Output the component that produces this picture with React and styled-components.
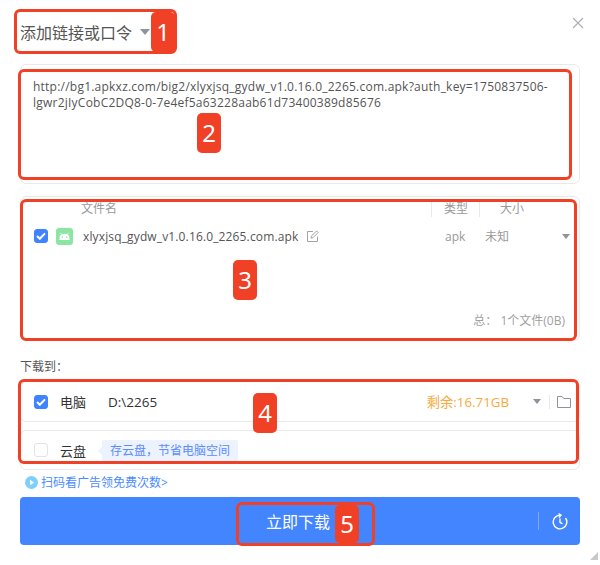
import React from "react";
import styled, { createGlobalStyle } from "styled-components";

const FONT = `"Open Sans", "Noto Sans CJK SC", "Noto Sans", sans-serif`;

const Global = createGlobalStyle`
  html, body { margin: 0; padding: 0; background: #fff; }
  body { font-family: ${FONT}; overflow: hidden; }
  * { box-sizing: border-box; }
`;

const Dialog = styled.div`
  position: relative;
  width: 600px;
  height: 565px;
  background: #fff;
  padding: 0 20px;
  overflow: hidden;
`;

const Header = styled.header`
  height: 64px;
  display: flex;
  align-items: center;
  gap: 8px;
`;
const Title = styled.h1`
  margin: 0;
  font-size: 16px;
  font-weight: 400;
  color: #555;
`;
const Caret = styled.span`
  display: block;
  width: 0;
  height: 0;
  flex: none;
  border-left: 4.5px solid transparent;
  border-right: 4.5px solid transparent;
  border-top: 5px solid #8f939c;
`;
const TitleCaret = styled(Caret)`
  border-left-width: 5px;
  border-right-width: 5px;
  border-top-width: 6px;
`;
const Close = styled.button`
  position: absolute;
  top: 17px;
  right: 16px;
  width: 12px;
  height: 12px;
  padding: 0;
  border: 0;
  background: none;
  display: block;
`;

const Panel = styled.section`
  background: #fff;
  border: 1px solid #e9e9e9;
  border-radius: 6px;
`;
const UrlBox = styled(Panel)`
  width: 560px;
  height: 120px;
  padding: 14px 12px;
  font-size: 12px;
  line-height: 16px;
  letter-spacing: 0.23px;
  color: #555;
`;
const FileBox = styled(Panel)`
  width: 560px;
  height: 145px;
  margin-top: 12px;
  display: flex;
  flex-direction: column;
`;
const Columns = styled.div`
  display: grid;
  grid-template-columns: 60px 350px 48px 1fr;
  height: 22px;
  align-items: center;
  font-size: 12px;
  color: #999;
  padding-top: 2px;
`;
const Col = styled.span`
  grid-column: ${(p) => p.$col};
  padding-left: ${(p) => p.$pad}px;
  border-left: ${(p) => (p.$sep ? "1px solid #e9e9e9" : "0")};
  line-height: 16px;
`;
const FileRow = styled.div`
  display: flex;
  align-items: center;
  height: 34px;
  padding-left: 13px;
  font-size: 12px;
  color: #555;
`;
const Check = styled.span`
  flex: none;
  width: 14px;
  height: 14px;
  border-radius: 3px;
  display: flex;
  align-items: center;
  justify-content: center;
  background: ${(p) => (p.$on ? "#3f83ff" : "#fff")};
  border: 1px solid ${(p) => (p.$on ? "#3f83ff" : "#e3e3e3")};
`;
const ApkIcon = styled.span`
  flex: none;
  width: 17px;
  height: 17px;
  margin-left: 8px;
  border-radius: 3px;
  background: #8be6a4;
  display: flex;
  align-items: center;
  justify-content: center;
`;
const FileName = styled.span`
  margin-left: 10px;
  width: 216px;
  white-space: nowrap;
  letter-spacing: 0.14px;
`;
const EditIcon = styled.svg`
  flex: none;
  margin-left: 7px;
`;
const FileType = styled.span`
  margin-left: 126px;
  width: 40px;
  color: #999;
`;
const FileSize = styled.span`
  color: #999;
  width: 77px;
  font-size: 12px;
`;
const Total = styled.div`
  margin-top: auto;
  height: 40px;
  padding: 11px 14px 0 0;
  text-align: right;
  font-size: 12px;
  color: #a0a0a0;
`;

const Label = styled.div`
  margin-top: 17px;
  height: 18px;
  font-size: 12px;
  line-height: 18px;
  color: #555;
`;
const StoreCard = styled(Panel)`
  width: 560px;
  height: ${(p) => p.$h}px;
  margin-top: ${(p) => p.$mt}px;
  display: flex;
  align-items: center;
  padding: 0 8px 0 13px;
  font-size: 13px;
  color: #333;
`;
const StoreName = styled.span`
  margin-left: 12px;
  width: 48px;
  flex: none;
`;
const Path = styled.span`
  font-size: 13.5px;
`;
const Free = styled.span`
  margin-left: auto;
  font-size: 13.3px;
  color: #f9a93b;
`;
const StoreCaret = styled(Caret)`
  margin-left: 24px;
`;
const Divider = styled.span`
  width: 1px;
  height: ${(p) => p.$h}px;
  flex: none;
  background: ${(p) => p.$c};
  margin: 0 ${(p) => p.$r}px 0 ${(p) => p.$l}px;
`;
const Tag = styled.span`
  position: relative;
  margin-left: -6px;
  height: 21px;
  padding: 0 8px;
  border-radius: 2px;
  background: #edf2ff;
  color: #5b8cff;
  font-size: 12px;
  line-height: 21px;
  &::before {
    content: "";
    position: absolute;
    left: -4px;
    top: 7px;
    border-top: 4px solid transparent;
    border-bottom: 4px solid transparent;
    border-right: 4px solid #edf2ff;
  }
`;
const Promo = styled.a`
  display: flex;
  align-items: center;
  height: 27px;
  padding: 0 0 3px 5px;
  gap: 3px;
  font-size: 12px;
  color: #4a8cff;
`;
const Submit = styled.button`
  width: 560px;
  height: 48px;
  border: 0;
  border-radius: 4px;
  background: #4285ff;
  color: #fff;
  font: 400 16px ${FONT};
  display: flex;
  align-items: center;
  padding: 0 12px 0 246px;
`;
const ClockWrap = styled.span`
  margin-left: auto;
  display: flex;
  align-items: center;
`;

const Annot = styled.div`
  position: absolute;
  left: ${(p) => p.$x}px;
  top: ${(p) => p.$y}px;
  width: ${(p) => p.$w}px;
  height: ${(p) => p.$h}px;
  border: 3.5px solid #f04025;
  border-radius: 6px;
  pointer-events: none;
`;
const Badge = styled.div`
  position: absolute;
  left: ${(p) => p.$x}px;
  top: ${(p) => p.$y}px;
  width: 24px;
  height: ${(p) => p.$h || 40}px;
  border-radius: 5px;
  background: #f04025;
  color: #fff;
  font: 400 24px/${(p) => p.$h || 40}px "Noto Sans", sans-serif;
  text-align: center;
`;

const ResizeGrip = styled.span`
  position: absolute;
  right: 2px;
  bottom: 5px;
  width: 0;
  height: 0;
  border-left: 8px solid transparent;
  border-bottom: 8px solid #c9c9c9;
`;

const Tick = () => (
  <svg width="10" height="8" viewBox="0 0 10 8" fill="none">
    <path d="M1 4l2.8 2.8L9 1.4" stroke="#fff" strokeWidth="2" />
  </svg>
);

export default function App() {
  return (
    <Dialog>
      <Global />
      <Header>
        <Title>添加链接或口令</Title>
        <TitleCaret />
        <Close aria-label="关闭">
          <svg width="12" height="12" viewBox="0 0 12 12" fill="none">
            <path d="M1 1l10 10M11 1L1 11" stroke="#a9adb5" strokeWidth="1.1" />
          </svg>
        </Close>
      </Header>

      <UrlBox>
        http://bg1.apkxz.com/big2/xlyxjsq_gydw_v1.0.16.0_2265.com.apk?auth_key=1750837506-lgwr2jIyCobC2DQ8-0-7e4ef5a63228aab61d73400389d85676
      </UrlBox>

      <FileBox>
        <Columns>
          <Col $col={2}>文件名</Col>
          <Col $col={3} $sep $pad={12}>类型</Col>
          <Col $col={4} $sep $pad={20}>大小</Col>
        </Columns>
        <FileRow>
          <Check $on><Tick /></Check>
          <ApkIcon>
            <svg width="11" height="9" viewBox="0 0 11 9" fill="none">
              <path d="M2.5 2.5L1.5 .8M8.5 2.5L9.5 .8" stroke="#fff" strokeWidth=".8" />
              <path d="M.5 8V5.5C.5 3.2 2.5 1.8 5.5 1.8S10.5 3.2 10.5 5.5V8z" fill="#fff" />
              <circle cx="3.5" cy="5.3" r=".7" fill="#8be6a4" />
              <circle cx="7.5" cy="5.3" r=".7" fill="#8be6a4" />
            </svg>
          </ApkIcon>
          <FileName>xlyxjsq_gydw_v1.0.16.0_2265.com.apk</FileName>
          <EditIcon width="13" height="13" viewBox="0 0 13 13" fill="none" stroke="#a3a3a3" strokeWidth="1">
            <path d="M7 1.5H1.5v10h10V6.5" />
            <path d="M5 8.2l.4-2L10.5.9l1.6 1.6L7 7.7z" />
          </EditIcon>
          <FileType>apk</FileType>
          <FileSize>未知</FileSize>
          <Caret />
        </FileRow>
        <Total>总： 1个文件(0B)</Total>
      </FileBox>

      <Label>下载到：</Label>

      <StoreCard $h={41} $mt={5}>
        <Check $on><Tick /></Check>
        <StoreName>电脑</StoreName>
        <Path>D:\2265</Path>
        <Free>剩余:16.71GB</Free>
        <StoreCaret />
        <Divider $h={14} $c="#e9e9e9" $l={8} $r={7} />
        <svg width="14" height="12" viewBox="0 0 14 12" fill="none" stroke="#8f939c" strokeWidth="1">
          <path d="M.5 11.5V.5h4.6l1.6 2h6.8v9z" />
        </svg>
      </StoreCard>
      <StoreCard $h={40} $mt={8}>
        <Check />
        <StoreName>云盘</StoreName>
        <Tag>存云盘，节省电脑空间</Tag>
      </StoreCard>

      <Promo>
        <svg width="13" height="13" viewBox="0 0 13 13">
          <circle cx="6.5" cy="6.5" r="6.5" fill="#7cd0fb" />
          <path d="M5 3.8v5.4l4.2-2.7z" fill="#fff" />
        </svg>
        扫码看广告领免费次数&gt;
      </Promo>

      <Submit>
        立即下载
        <ClockWrap>
          <Divider $h={18} $c="#7aa9ff" $l={0} $r={13} />
          <svg width="16" height="17" viewBox="0 0 16 17" fill="none" stroke="#fff" strokeWidth="1.4">
            <path d="M8 2.2A6.8 6.8 0 1 0 13.5 5" />
            <path d="M6.5 .6L9 2.2 7 4.6" />
            <path d="M8 5.5v3.8l2.5 1.5" />
          </svg>
        </ClockWrap>
      </Submit>

      <Annot $x={14} $y={9} $w={163} $h={45} />
      <Badge $x={151} $y={12}>1</Badge>
      <Annot $x={18} $y={69} $w={554} $h={111} />
      <Badge $x={197} $y={113}>2</Badge>
      <Annot $x={20} $y={199} $w={557} $h={142} />
      <Badge $x={233} $y={260}>3</Badge>
      <Annot $x={18} $y={379} $w={561} $h={85} />
      <Badge $x={253} $y={393}>4</Badge>
      <Annot $x={236} $y={502} $w={139} $h={44} />
      <Badge $x={335} $y={505} $h={38}>5</Badge>
      <ResizeGrip />
    </Dialog>
  );
}
